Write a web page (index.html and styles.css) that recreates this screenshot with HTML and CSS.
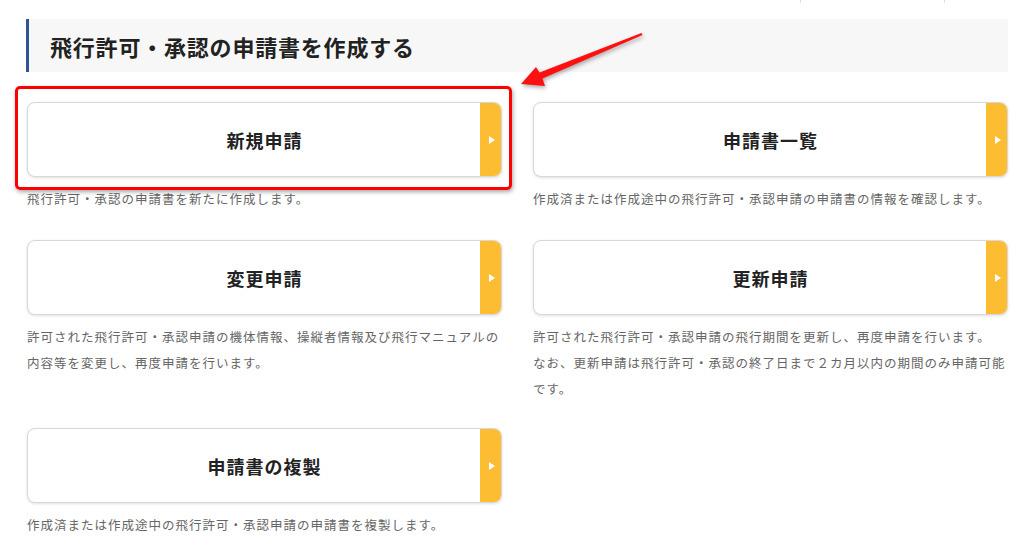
FILE: index.html
```html
<!DOCTYPE html>
<html lang="ja">
<head>
    <meta charset="UTF-8">
    <meta name="viewport" content="width=device-width, initial-scale=1.0">
    <title>飛行許可・承認の申請書を作成する</title>
    <link rel="stylesheet" href="styles.css">
</head>
<body>
    <div class="topbar">
        <span class="tick first"></span>
        <span class="tick second"></span>
    </div>
    <div class="page">
        <h2 class="heading">飛行許可・承認の申請書を作成する</h2>
        <div class="menu">
            <div class="item">
                <a class="card" href="#"><span class="label">新規申請</span><span class="go"></span></a>
                <p class="desc">飛行許可・承認の申請書を新たに作成します。</p>
            </div>
            <div class="item">
                <a class="card" href="#"><span class="label">申請書一覧</span><span class="go"></span></a>
                <p class="desc">作成済または作成途中の飛行許可・承認申請の申請書の情報を確認します。</p>
            </div>
            <div class="item">
                <a class="card" href="#"><span class="label">変更申請</span><span class="go"></span></a>
                <p class="desc">許可された飛行許可・承認申請の機体情報、操縦者情報及び飛行マニュアルの内容等を変更し、再度申請を行います。</p>
            </div>
            <div class="item">
                <a class="card" href="#"><span class="label">更新申請</span><span class="go"></span></a>
                <p class="desc">許可された飛行許可・承認申請の飛行期間を更新し、再度申請を行います。<br>なお、更新申請は飛行許可・承認の終了日まで２カ月以内の期間のみ申請可能です。</p>
            </div>
            <div class="item">
                <a class="card" href="#"><span class="label">申請書の複製</span><span class="go"></span></a>
                <p class="desc">作成済または作成途中の飛行許可・承認申請の申請書を複製します。</p>
            </div>
        </div>
    </div>

    <!-- annotation -->
    <div class="mark"></div>
    <svg class="arrow" width="1024" height="120" viewBox="0 0 1024 120">
        <polygon points="521,84 536,67 539.5,72.5 641.5,33 642.5,35 542.5,78.5 545,86" fill="#ff1010"/>
    </svg>
</body>
</html>
```

FILE: styles.css
```css
body {
    margin: 0;
    background-color: #fff;
    font-family: "Noto Sans CJK JP", "Noto Sans", sans-serif;
    color: #222;
}
.topbar {
    height: 3px;
    display: flex;
}
.tick {
    width: 1px;
    background-color: #ddd;
}
.tick.first {
    margin-left: 800px;
}
.tick.second {
    margin-left: 143px;
}
.page {
    padding: 16px 16px 0 26px;
}
.heading {
    margin: 0;
    height: 53px;
    display: flex;
    align-items: center;
    padding-left: 21px;
    border-left: 3px solid #2f5592;
    background-color: #f7f7f7;
    font-size: 22px;
    font-weight: bold;
    letter-spacing: 0.8px;
    color: #222;
}
.menu {
    display: grid;
    grid-template-columns: 475px 475px;
    column-gap: 31px;
    row-gap: 28px;
    margin: 30px 0 0 1px;
}
.card {
    display: flex;
    height: 75px;
    box-sizing: border-box;
    border: 1px solid #d8d8d8;
    border-radius: 8px;
    overflow: hidden;
    background-color: #fff;
    box-shadow: 0 1px 3px rgba(0, 0, 0, 0.12);
    text-decoration: none;
    color: #222;
}
.label {
    flex: 1;
    display: flex;
    align-items: center;
    justify-content: center;
    padding-left: 21px;
    font-size: 18px;
    font-weight: bold;
    letter-spacing: 1px;
}
.go {
    width: 21px;
    background-color: #fdbd33;
    display: flex;
    align-items: center;
    justify-content: center;
}
.go::after {
    content: "";
    border-left: 6px solid #fff;
    border-top: 4px solid transparent;
    border-bottom: 4px solid transparent;
    margin-left: 2px;
}
.desc {
    margin: 9px 0 0;
    font-size: 12.5px;
    line-height: 26px;
    letter-spacing: 1px;
    color: #666;
}
.item:nth-child(n+5) {
    margin-top: -2px;
}
.mark {
    position: absolute;
    left: 15px;
    top: 86px;
    width: 491px;
    height: 98px;
    border: 3px solid #ff0000;
    border-radius: 5px;
    box-shadow: 1px 2px 4px rgba(0, 0, 0, 0.35);
}
.arrow {
    position: absolute;
    left: 0;
    top: 0;
    filter: drop-shadow(1px 2px 2px rgba(0, 0, 0, 0.35));
}
```
